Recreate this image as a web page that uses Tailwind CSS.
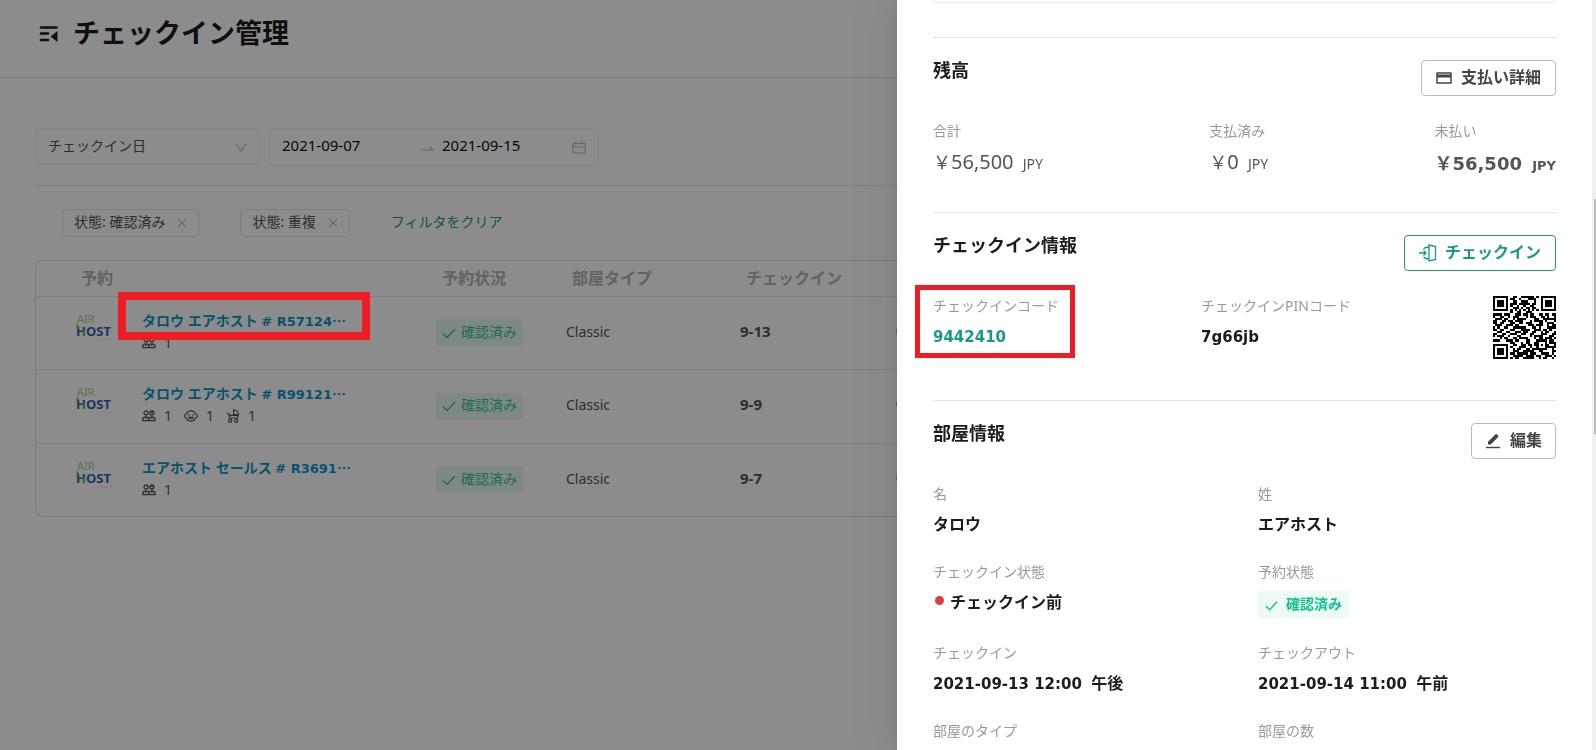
<!DOCTYPE html>
<html lang="ja">
<head>
    <meta charset="UTF-8">
    <meta name="viewport" content="width=device-width, initial-scale=1.0">
    <script src="https://cdn.jsdelivr.net/npm/@tailwindcss/browser@4"></script>
    <title>チェックイン管理</title>
</head>
<body class="h-screen overflow-hidden bg-white font-['Noto_Sans','Noto_Sans_CJK_JP',sans-serif] text-sm text-[#555]">

    <!-- Icons -->
    <svg class="hidden">
        <symbol id="check" viewBox="0 0 14 14"><path d="M1 7.5l4 4L13 3" fill="none" stroke="currentColor" stroke-width="1.5"/></symbol>
        <symbol id="close" viewBox="0 0 10 10"><path d="M1 1l8 8M9 1L1 9" fill="none" stroke="currentColor" stroke-width="1"/></symbol>
        <symbol id="people" viewBox="0 0 14 12">
            <g fill="none" stroke="currentColor" stroke-width="1.3">
                <circle cx="4" cy="3" r="2"/><circle cx="9.8" cy="3" r="2"/><path d="M7.8 2.2h4"/>
                <path d="M.8 10.6V9.4C.8 7.8 2 6.8 3.8 6.8S6.9 7.8 6.9 9.4v1.2zM6.9 10.6V9.4c0-1.6 1.2-2.6 3-2.6s3.1 1 3.1 2.6v1.2z"/>
                <path d="M3.9 7v2M9.9 7v2"/>
            </g>
        </symbol>
        <symbol id="child" viewBox="0 0 14 12">
            <g fill="none" stroke="currentColor" stroke-width="1.2">
                <path d="M2.3 4C3.1 2 4.9.8 7 .8S10.900 2 11.700 4c1 .2 1.600.9 1.600 2s-.6 1.800-1.600 2c-.8 2-2.600 3.200-4.700 3.200S3.100 10 2.300 8C1.300 7.800.7 7.100.7 6s.6-1.800 1.600-2z"/>
                <path d="M4.800 7.300h4.400c-.3 1.200-1.100 1.700-2.200 1.700s-1.900-.5-2.200-1.700zM4.200 4.800h1.600M8.200 4.800h1.600"/>
            </g>
        </symbol>
        <symbol id="stroller" viewBox="0 0 14 14">
            <g fill="none" stroke="currentColor" stroke-width="1.200">
                <path d="M.5 4.500h2L3.800 9h7.700L12.300 5.500H7.600V.8c2.700 0 4.700 2 4.700 4.700M3 6.300h9"/>
                <circle cx="4.200" cy="11.700" r="1.600"/><circle cx="10.300" cy="11.700" r="1.600"/>
            </g>
        </symbol>
        <symbol id="airhost" viewBox="0 0 36 28">
            <text x="1" y="10" font-size="11" fill="#a3d48e" font-family="Noto Sans">AIR</text>
            <text x="0" y="23" font-size="13" font-weight="700" fill="#3462b8" font-family="Open Sans">HOST</text>
            <path d="M1.500 11.500v5M8 17v6" stroke="#6fbe3c" stroke-width="2"/>
            <text x="20" y="28" font-size="4" fill="#c4dfb8" font-family="Noto Sans">エアホスト</text>
        </symbol>
    </svg>

    <!-- Page -->
    <main>
        <header class="flex h-[78px] items-start gap-[15px] border-b border-[#e4e4e4] pt-[13px] pl-[39px]">
            <button type="button" aria-label="メニュー" class="mt-[13px] text-[#1c1c1c]">
                <svg class="h-4 w-[19px]" viewBox="0 0 19 16">
                    <path d="M2 1.500h15.500M2 7.500h7M2 14h7" stroke="currentColor" stroke-width="2.600" stroke-linecap="round"/>
                    <path d="M18.500 5v11L11.500 10.500z" fill="currentColor"/>
                </svg>
            </button>
            <h1 class="text-[27px] leading-[40px] font-bold text-[#1c1c1c]">チェックイン管理</h1>
        </header>

        <div class="px-[35px]">
            <form class="flex items-start gap-[9px] border-b border-[#e8e8e8] pt-[51px] pb-[19px]">
                <div class="relative">
                    <select aria-label="日付の種類" class="h-9 w-[225px] appearance-none rounded border border-[#eee] pb-[2px] pl-3 text-[#555]">
                        <option>チェックイン日</option>
                    </select>
                    <svg class="pointer-events-none absolute top-[14px] right-[13px] h-[10px] w-3 text-[#bbb]" viewBox="0 0 12 10"><path d="M1 1l5 7 5-7" fill="none" stroke="currentColor" stroke-width="1.200"/></svg>
                </div>
                <div class="flex h-[37px] w-[330px] items-center rounded border border-[#eee] px-3 text-[15px] text-[#111]">
                    <input type="text" aria-label="開始日" value="2021-09-07" class="mb-1 w-[130px]">
                    <svg class="mr-2 ml-2 h-2 w-[14px] shrink-0 text-[#bbb]" viewBox="0 0 14 8"><path d="M1 6h12L9 2.500" fill="none" stroke="currentColor" stroke-width="1.200"/></svg>
                    <input type="text" aria-label="終了日" value="2021-09-15" class="mb-1 w-[130px]">
                    <svg class="h-[13px] w-[14px] shrink-0 text-[#bbb]" viewBox="0 0 14 13"><path d="M1 2.500h12v9.500H1zM1 6h12M4 0v4M10 0v4" fill="none" stroke="currentColor" stroke-width="1.100"/></svg>
                </div>
            </form>

            <div class="flex items-center pt-[23px] pb-[23px] pl-[27px]">
                <span class="mr-[41px] flex h-7 items-center gap-3 rounded border border-[#e6e6e6] px-[11px]">
                    <span class="pb-[2px]">状態: 確認済み</span>
                    <button type="button" aria-label="削除" class="text-[#aaa]"><svg class="size-[10px]"><use href="#close"/></svg></button>
                </span>
                <span class="mr-[41px] flex h-7 items-center gap-3 rounded border border-[#e6e6e6] px-[11px]">
                    <span class="pb-[2px]">状態: 重複</span>
                    <button type="button" aria-label="削除" class="text-[#aaa]"><svg class="size-[10px]"><use href="#close"/></svg></button>
                </span>
                <a href="#" class="pb-[2px] text-[#1a9988]">フィルタをクリア</a>
            </div>

            <div class="rounded-lg border border-[#dedede]">
                <table class="w-full table-fixed border-collapse text-left">
                    <colgroup>
                        <col class="w-[96px]"><col class="w-[296px]"><col class="w-[130px]"><col class="w-[174px]"><col class="w-[157px]"><col>
                    </colgroup>
                    <thead>
                        <tr class="h-[35px] border-b border-[#e6e6e6] text-base text-[#b4b4b4]">
                            <th colspan="2" class="pl-[45px]">予約</th>
                            <th class="pl-[14px]">予約状況</th>
                            <th class="pl-[14px]">部屋タイプ</th>
                            <th class="pl-[14px]">チェックイン</th>
                            <th class="pl-[14px]">チェックアウト</th>
                        </tr>
                    </thead>
                    <tbody>
                        <tr class="h-[73px] border-b border-[#e6e6e6]">
                            <td class="pb-3 pl-[40px]"><svg class="h-7 w-9"><use href="#airhost"/></svg></td>
                            <td class="pb-1 pl-[10px]">
                                <a href="#" class="block leading-[22px] font-semibold text-[#0b98c8]">タロウ エアホスト <span class="font-['DejaVu_Sans'] text-[13px]"># R57124</span><span class="font-['Noto_Sans_CJK_JP']">…</span></a>
                                <div class="flex items-center gap-2 leading-5"><svg class="h-3 w-[14px]"><use href="#people"/></svg>1</div>
                            </td>
                            <td class="pl-2"><span class="inline-flex h-[27px] items-center gap-[5px] rounded bg-[#e5faf3] px-[6px] text-[#3cc795]"><svg class="size-[14px]"><use href="#check"/></svg><span class="pb-[2px]">確認済み</span></span></td>
                            <td class="pb-[2px] pl-2">Classic</td>
                            <td class="pb-[2px] pl-2 text-[15px] font-bold">9-13</td>
                            <td class="pb-1 pl-[7px]"><span class="block size-2 rounded-full bg-[#f59a23]"></span></td>
                        </tr>
                        <tr class="h-[74px] border-b border-[#e6e6e6]">
                            <td class="pb-3 pl-[40px]"><svg class="h-7 w-9"><use href="#airhost"/></svg></td>
                            <td class="pb-1 pl-[10px]">
                                <a href="#" class="block leading-[22px] font-semibold text-[#0b98c8]">タロウ エアホスト <span class="font-['DejaVu_Sans'] text-[13px]"># R99121</span><span class="font-['Noto_Sans_CJK_JP']">…</span></a>
                                <div class="flex items-center gap-3 leading-5">
                                    <span class="flex items-center gap-2"><svg class="h-3 w-[14px]"><use href="#people"/></svg>1</span>
                                    <span class="flex items-center gap-2"><svg class="h-3 w-[14px]"><use href="#child"/></svg>1</span>
                                    <span class="flex items-center gap-2"><svg class="size-[14px]"><use href="#stroller"/></svg>1</span>
                                </div>
                            </td>
                            <td class="pl-2"><span class="inline-flex h-[27px] items-center gap-[5px] rounded bg-[#e5faf3] px-[6px] text-[#3cc795]"><svg class="size-[14px]"><use href="#check"/></svg><span class="pb-[2px]">確認済み</span></span></td>
                            <td class="pb-[2px] pl-2">Classic</td>
                            <td class="pb-[2px] pl-2 text-[15px] font-bold">9-9</td>
                            <td class="pb-1 pl-[7px]"><span class="block size-2 rounded-full bg-[#f59a23]"></span></td>
                        </tr>
                        <tr class="h-[73px]">
                            <td class="pb-3 pl-[40px]"><svg class="h-7 w-9"><use href="#airhost"/></svg></td>
                            <td class="pb-1 pl-[10px]">
                                <a href="#" class="block leading-[22px] font-semibold text-[#0b98c8]">エアホスト セールス <span class="font-['DejaVu_Sans'] text-[13px]"># R3691</span><span class="font-['Noto_Sans_CJK_JP']">…</span></a>
                                <div class="flex items-center gap-2 leading-5"><svg class="h-3 w-[14px]"><use href="#people"/></svg>1</div>
                            </td>
                            <td class="pl-2"><span class="inline-flex h-[27px] items-center gap-[5px] rounded bg-[#e5faf3] px-[6px] text-[#3cc795]"><svg class="size-[14px]"><use href="#check"/></svg><span class="pb-[2px]">確認済み</span></span></td>
                            <td class="pb-[2px] pl-2">Classic</td>
                            <td class="pb-[2px] pl-2 text-[15px] font-bold">9-7</td>
                            <td class="pb-1 pl-[7px]"><span class="block size-2 rounded-full bg-[#f59a23]"></span></td>
                        </tr>
                    </tbody>
                </table>
            </div>
        </div>
    </main>

    <div class="fixed inset-0 bg-black/45"></div>
    <div class="absolute top-[292px] left-[118px] h-12 w-[252px] border-8 border-[#ee1c24]"></div>

    <!-- Drawer -->
    <aside class="fixed inset-y-0 right-0 flex w-[699px] bg-white shadow-[-6px_0_16px_-8px_rgba(0,0,0,0.08),-9px_0_28px_rgba(0,0,0,0.05),-12px_0_48px_16px_rgba(0,0,0,0.03)]">
        <div class="min-w-0 flex-1 overflow-hidden px-9">
            <div class="mb-[34px] h-[3px] rounded-b border border-t-0 border-[#ebebeb]"></div>

            <section class="border-t border-[#e4e4e4] pt-[22px] pb-[30px]">
                <div class="flex items-start justify-between">
                    <h2 class="text-lg leading-5 font-bold text-[#1c1c1c]">残高</h2>
                    <button type="button" class="flex h-9 items-center gap-[9px] rounded border border-[#bbb] px-[14px] text-base font-bold text-[#444]">
                        <svg class="h-3 w-4" viewBox="0 0 16 12"><path d="M1 1h14v10H1z" fill="none" stroke="currentColor" stroke-width="1.500" stroke-linejoin="round"/><path d="M1 2.500h14v3H1z" fill="currentColor"/></svg>
                        <span class="pb-[2px]">支払い詳細</span>
                    </button>
                </div>
                <dl class="flex justify-between pt-6">
                    <div>
                        <dt class="leading-[22px] text-[#999]">合計</dt>
                        <dd class="pt-1 text-xl leading-8"><span class="font-['Noto_Sans_CJK_JP'] text-lg">￥</span>56,500 <span class="ml-1 text-sm">JPY</span></dd>
                    </div>
                    <div>
                        <dt class="leading-[22px] text-[#999]">支払済み</dt>
                        <dd class="pt-1 text-xl leading-8"><span class="font-['Noto_Sans_CJK_JP'] text-lg">￥</span>0 <span class="ml-1 text-sm">JPY</span></dd>
                    </div>
                    <div>
                        <dt class="leading-[22px] text-[#999]">未払い</dt>
                        <dd class="pt-1 font-['DejaVu_Sans'] text-lg leading-8 font-bold"><span class="font-['Noto_Sans_CJK_JP']">￥</span>56,500 <span class="ml-1 text-[13px]">JPY</span></dd>
                    </div>
                </dl>
            </section>

            <section class="border-t border-[#e4e4e4] pt-[22px] pb-[41px]">
                <div class="flex items-start justify-between">
                    <h2 class="text-lg leading-5 font-bold text-[#1c1c1c]">チェックイン情報</h2>
                    <button type="button" class="flex h-9 items-center gap-2 rounded border border-[#1a9988] px-[14px] text-base font-bold text-[#1a9988]">
                        <svg class="h-[18px] w-[18px]" viewBox="0 0 18 18">
                            <path d="M0 9h7M4.500 6.500L7 9l-2.500 2.500M10 1l6.500 1.500v13L10 17zM9.500 3C7 3 5.500 3.800 4.500 5M9.500 15c-2.500 0-4-.8-5-2" fill="none" stroke="currentColor" stroke-width="1.300"/>
                        </svg>
                        <span class="pb-[2px]">チェックイン</span>
                    </button>
                </div>
                <dl class="flex justify-between pt-6">
                    <div>
                        <dt class="leading-[22px] text-[#999]">チェックインコード</dt>
                        <dd class="pt-1 font-['DejaVu_Sans'] text-[15px] leading-8 font-bold text-[#1a9988]">9442410</dd>
                    </div>
                    <div>
                        <dt class="leading-[22px] text-[#999]">チェックインPINコード</dt>
                        <dd class="pt-1 font-['DejaVu_Sans'] text-[15px] leading-8 font-bold text-[#1c1c1c]">7g66jb</dd>
                    </div>
                    <svg id="qr" class="mt-px size-[63px]" viewBox="0 0 29 29" shape-rendering="crispEdges" role="img" aria-label="QRコード"></svg>
                </dl>
            </section>

            <section class="border-t border-[#e4e4e4] pt-[22px]">
                <div class="flex items-start justify-between">
                    <h2 class="text-lg leading-5 font-bold text-[#1c1c1c]">部屋情報</h2>
                    <button type="button" class="flex h-9 items-center gap-[9px] rounded border border-[#bbb] px-[13px] text-base font-bold text-[#444]">
                        <svg class="size-4" viewBox="0 0 16 16"><path d="M3 11.500V8.800L10.500 1.300c.4-.4.9-.4 1.300 0l1.400 1.400c.4.4.4.9 0 1.300L5.700 11.500z" fill="currentColor"/><path d="M1 14.500h14" stroke="currentColor" stroke-width="1.400"/></svg>
                        <span class="pb-[2px]">編集</span>
                    </button>
                </div>
                <dl class="grid grid-cols-2 gap-x-[27px] pt-6 text-base font-bold text-[#1c1c1c]">
                    <div class="h-[78px]">
                        <dt class="text-sm leading-[22px] font-normal text-[#999]">名</dt>
                        <dd class="pt-[3px] leading-8">タロウ</dd>
                    </div>
                    <div class="h-[78px]">
                        <dt class="text-sm leading-[22px] font-normal text-[#999]">姓</dt>
                        <dd class="pt-[3px] leading-8">エアホスト</dd>
                    </div>
                    <div class="h-[81px]">
                        <dt class="text-sm leading-[22px] font-normal text-[#999]">チェックイン状態</dt>
                        <dd class="flex items-center gap-[6px] pt-[3px] pl-[2px] leading-8"><span class="mb-1 size-[9px] rounded-full bg-[#e03e3e]"></span>チェックイン前</dd>
                    </div>
                    <div class="h-[81px]">
                        <dt class="text-sm leading-[22px] font-normal text-[#999]">予約状態</dt>
                        <dd class="pt-2"><span class="inline-flex h-[27px] items-center gap-2 rounded bg-[#edfaf6] px-[7px] text-sm text-[#12c48b]"><svg class="mt-px h-[13px] w-[13px]"><use href="#check"/></svg><span class="pb-[2px]">確認済み</span></span></dd>
                    </div>
                    <div class="h-[78px]">
                        <dt class="text-sm leading-[22px] font-normal text-[#999]">チェックイン</dt>
                        <dd class="pt-[3px] leading-8"><span class="mr-1 font-['DejaVu_Sans'] text-[15px]">2021-09-13 12:00 </span>午後</dd>
                    </div>
                    <div class="h-[78px]">
                        <dt class="text-sm leading-[22px] font-normal text-[#999]">チェックアウト</dt>
                        <dd class="pt-[3px] leading-8"><span class="mr-1 font-['DejaVu_Sans'] text-[15px]">2021-09-14 11:00 </span>午前</dd>
                    </div>
                    <div>
                        <dt class="text-sm leading-[22px] font-normal text-[#999]">部屋のタイプ</dt>
                    </div>
                    <div>
                        <dt class="text-sm leading-[22px] font-normal text-[#999]">部屋の数</dt>
                    </div>
                </dl>
            </section>
        </div>
        <!-- scrollbar -->
        <div class="flex w-1 flex-col items-end bg-[#f0f0f0]">
            <div class="mt-[199px] h-[235px] w-[2px] bg-[#bdbdbd]"></div>
        </div>
    </aside>
    <div class="absolute top-[285px] right-[521px] h-[73px] w-[160px] border-[5px] border-[#ee1c24]"></div>

    <script>
        // one string per row of modules
        const rows = [
            '11111110011001111110101111111',
            '10000010110010001111001000001',
            '10111010011001110001001011101',
            '10111010111011111011001011101',
            '10111010100100100110001011101',
            '10000010011101011011001000001',
            '11111110101010101010101111111',
            '00000000100110011100000000000',
            '11110111001110110110011011011',
            '10011001011100010111001101001',
            '01110110010111100001100111111',
            '11001101101111000101111010001',
            '11011000110011011100011001110',
            '01110011101100001110111001011',
            '10100110011111100011010001111',
            '11011000110001111001110110100',
            '00110011001110110011001011001',
            '11001100111001100110001110011',
            '10111001000110000101111000110',
            '00010110011011110001011011101',
            '11100011101100011000111110110',
            '00000000110001011001100010111',
            '11111110011001101101101011001',
            '10000010100011100100100011111',
            '10111010010110011011111110010',
            '10111010011100111110011000011',
            '10111010110111110111001111010',
            '10000010011111011110110011101',
            '11111110101100111110010110010'
        ];
        let d = '';
        rows.forEach((row, y) => [...row].forEach((m, x) => { if (m === '1') d += `M${x} ${y}h1v1h-1z`; }));
        document.getElementById('qr').innerHTML = `<path d="${d}"/>`;
    </script>
</body>
</html>
